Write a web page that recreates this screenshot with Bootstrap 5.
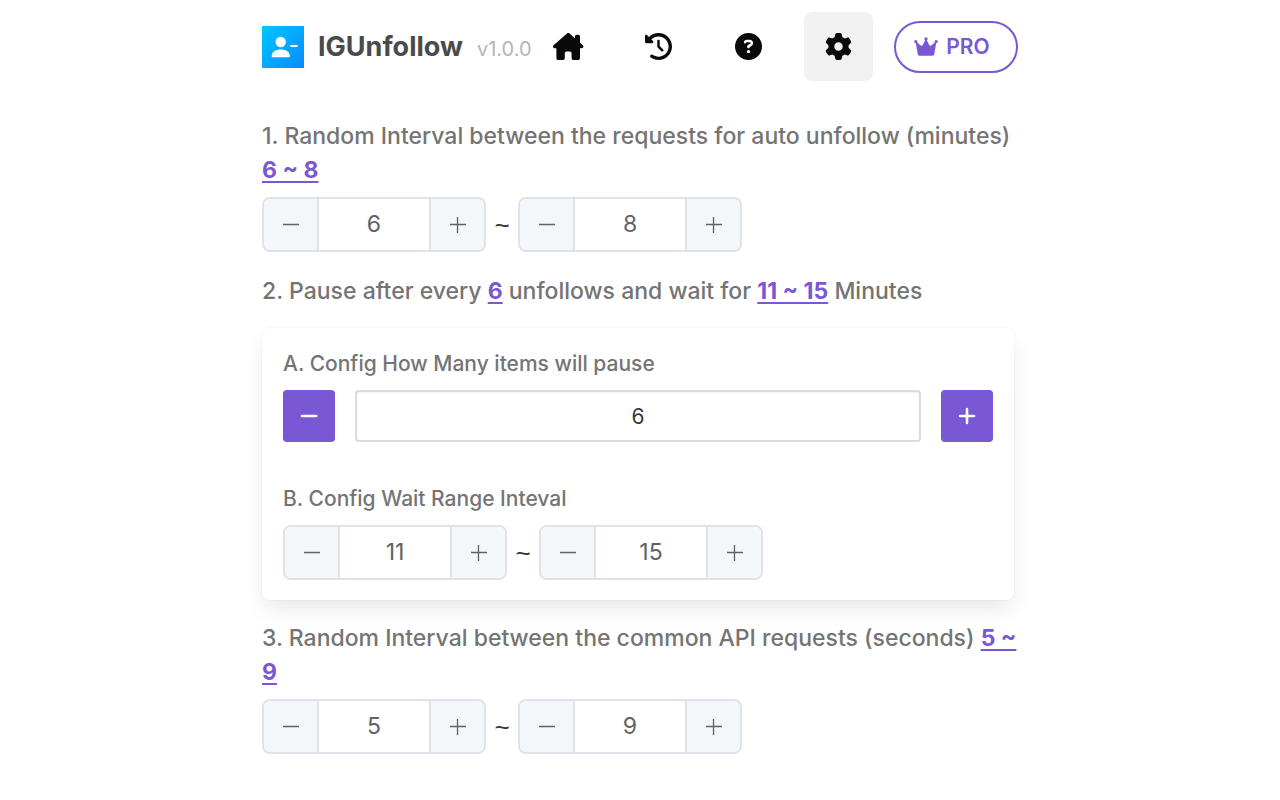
<!DOCTYPE html>
<html lang="en">
<head>
<meta charset="utf-8">
<meta name="viewport" content="width=device-width, initial-scale=1">
<title>IGUnfollow – Settings</title>
<link rel="stylesheet" href="https://cdn.jsdelivr.net/npm/bootstrap@5.3.0/dist/css/bootstrap.min.css">
<style>
  :root { --accent: #7957d5; --text-muted: #747474; --line: #dfe2e9; }
  body { font-family: Inter, "Liberation Sans", sans-serif; color: #4a4a4a; background: #fff; }
  .page { max-width: 756px; }
  .brand { gap: 14px; }
  .logo { width: 42px; height: 42px; }
  .app-name { font-size: 27px; font-weight: 700; line-height: 36px; color: #4a4a4a; }
  .app-version { font-size: 20px; line-height: 36px; color: #b5b5b5; }
  .nav-tile { width: 69px; height: 69px; border-radius: 8px; color: #0a0a0a; }
  .nav-tile.active { background: #f1f1f1; }
  .nav-tile svg { height: 27px; }
  .btn-pro { width: 124px; height: 52px; border: 2px solid var(--accent); color: var(--accent); font-size: 21px; font-weight: 600; }
  .btn-pro:hover { background: var(--accent); color: #fff; }
  .btn-pro svg { width: 24px; height: 21px; }
  .settings { padding-top: 38px; }
  .setting-title { font-size: 23px; line-height: 34px; font-weight: 500; color: var(--text-muted); }
  .sub-title { font-size: 21px; line-height: 32px; font-weight: 500; color: var(--text-muted); }
  .range-value { color: var(--accent); font-weight: 700; text-decoration: underline; text-decoration-thickness: 2px; text-underline-offset: 3px; text-decoration-skip-ink: none; }
  .panel { border-radius: 8px; padding: 20px 21px; box-shadow: 0 11px 22px -3px rgba(10,10,10,.1), 0 0 0 1px rgba(10,10,10,.02); }
  .stepper { width: 224px; height: 55px; border: 2px solid var(--line); border-radius: 8px; }
  .stepper .btn { width: 55px; flex: none; background: #f3f7fa; color: #606266; border-radius: 0; }
  .stepper .btn:first-child { border-right: 2px solid var(--line); }
  .stepper .btn:last-child { border-left: 2px solid var(--line); }
  .stepper input { min-width: 0; font-size: 23px; color: #606266; background: #fff; }
  .stepper svg { width: 18px; height: 18px; }
  .tilde { width: 32px; font-family: "Liberation Sans", sans-serif; font-size: 26px; line-height: 32px; text-align: center; color: #363636; }
  .btn-step { width: 52px; height: 52px; background: var(--accent); color: #fff; border-radius: 4px; }
  .btn-step:hover { background: #6943d0; color: #fff; }
  .btn-step svg { width: 18px; height: 18px; }
  .count-input { height: 52px; font-size: 21px; color: #363636; border: 2px solid #dbdbdb; border-radius: 4px; box-shadow: inset 0 1px 2px rgba(10,10,10,.05); }
  .count-row { gap: 20px; }
  .header-gap { gap: 21px; }
  .after-card { margin-top: 21px; }
  .stepper-row { margin-top: 10px; }
  .next-title { margin-top: 22px; }
  .card-space { margin-top: 20px; }
  .group-space { margin-top: 41px; }
  .control-space { margin-top: 10px; }
</style>
</head>
<body>
<svg class="d-none" aria-hidden="true">
  <symbol id="minus" viewBox="0 0 18 18"><path d="M1 8.500h16" stroke="currentColor" stroke-width="1.300"/></symbol>
  <symbol id="plus" viewBox="0 0 18 18"><path d="M1 8.500h16M8.500 1v16" stroke="currentColor" stroke-width="1.300"/></symbol>
  <symbol id="minus-bold" viewBox="0 0 18 18"><path d="M2 9h14" stroke="currentColor" stroke-width="2.600" stroke-linecap="round"/></symbol>
  <symbol id="plus-bold" viewBox="0 0 18 18"><path d="M2 9h14M9 2v14" stroke="currentColor" stroke-width="2.600" stroke-linecap="round"/></symbol>
</svg>
<div class="page container-fluid px-0">
  <header class="d-flex flex-wrap align-items-center justify-content-between pt-2 mt-1">
    <div class="brand d-flex align-items-center">
      <svg class="logo" viewBox="0 0 42 42" role="img" aria-label="IGUnfollow logo">
        <defs><linearGradient id="sky" x1="0" y1="0" x2="1" y2="1"><stop offset="0" stop-color="#00c6ff"/><stop offset="1" stop-color="#0a8bfb"/></linearGradient></defs>
        <path d="M0 0h42v42H0z" fill="url(#sky)"/>
        <circle cx="18.700" cy="16" r="5.200" fill="#fff"/>
        <path d="M9.800 31.200v-1.400c0-4 3.600-6.400 9-6.400s9 2.400 9 6.400v1.400z" fill="#fff"/>
        <path d="M29 20h6" stroke="#fff" stroke-width="1.800" stroke-linecap="round"/>
      </svg>
      <span class="app-name">IGUnfollow</span>
      <span class="app-version pt-1">v1.0.0</span>
    </div>
    <nav class="d-flex align-items-center header-gap" aria-label="Main">
      <a href="#" class="nav-tile d-flex align-items-center justify-content-center" aria-label="Home"><svg viewBox="0 0 576 512" fill="currentColor"><path d="M575.800 255.500c0 18-15 32.100-32 32.100h-32l.7 160.200c0 2.700-.2 5.400-.5 8.100V472c0 22.100-17.900 40-40 40H456c-1.100 0-2.200 0-3.300-.1c-1.400 .1-2.800 .1-4.200 .1H416 392c-22.100 0-40-17.900-40-40V448 384c0-17.700-14.300-32-32-32H256c-17.700 0-32 14.300-32 32v64 24c0 22.100-17.900 40-40 40H160 128.100c-1.500 0-3-.1-4.500-.2c-1.200 .1-2.400 .2-3.600 .2H104c-22.100 0-40-17.900-40-40V360c0-.9 0-1.900 .1-2.800V287.600H32c-18 0-32-14-32-32.100c0-9 3-17 10-24L266.400 8c7-7 15-8 22-8s15 2 21 7L416 100.700V64c0-17.700 14.300-32 32-32h32c17.700 0 32 14.300 32 32V185l52.800 46.400c8 7 12 15 11 24z"/></svg></a>
      <a href="#" class="nav-tile d-flex align-items-center justify-content-center" aria-label="History"><svg viewBox="0 0 512 512" fill="currentColor"><path d="M75 75L41 41C25.900 25.900 0 36.600 0 57.900V168c0 13.300 10.700 24 24 24H134.100c21.400 0 32.100-25.900 17-41l-30.800-30.800C155 85.500 203 64 256 64c106 0 192 86 192 192s-86 192-192 192c-40.800 0-78.600-12.700-109.700-34.400c-14.500-10.100-34.400-6.600-44.600 7.900s-6.600 34.400 7.900 44.600C151.200 495 201.700 512 256 512c141.400 0 256-114.600 256-256S397.400 0 256 0C185.300 0 121.300 28.700 75 75zm181 53c-13.300 0-24 10.700-24 24V256c0 6.400 2.500 12.500 7 17l72 72c9.400 9.400 24.600 9.400 33.900 0s9.400-24.600 0-33.900l-65-65V152c0-13.300-10.700-24-24-24z"/></svg></a>
      <a href="#" class="nav-tile d-flex align-items-center justify-content-center" aria-label="Help"><svg viewBox="0 0 512 512" fill="currentColor" fill-rule="evenodd"><path d="M256 512A256 256 0 1 0 256 0a256 256 0 1 0 0 512zM169.800 165.300c7.900-22.300 29.100-37.300 52.800-37.300h58.300c34.900 0 63.100 28.300 63.100 63.100c0 22.600-12.100 43.500-31.700 54.800L280 264.400c-.2 13-10.900 23.600-24 23.600c-13.300 0-24-10.700-24-24V250.500c0-8.600 4.600-16.500 12.100-20.800l44.300-25.400c4.700-2.700 7.600-7.700 7.600-13.100c0-8.400-6.800-15.100-15.100-15.100H222.600c-3.400 0-6.400 2.100-7.500 5.300l-.4 1.200c-4.400 12.500-18.200 19-30.600 14.600s-19-18.200-14.600-30.600l.4-1.200zM224 352a32 32 0 1 1 64 0 32 32 0 1 1 -64 0z"/></svg></a>
      <a href="#" class="nav-tile active d-flex align-items-center justify-content-center" aria-label="Settings" aria-current="page"><svg viewBox="0 0 512 512" fill="currentColor"><path d="M495.900 166.600c3.200 8.700 .5 18.400-6.400 24.600l-43.300 39.400c1.100 8.300 1.700 16.800 1.700 25.400s-.6 17.100-1.700 25.400l43.300 39.400c6.900 6.200 9.600 15.900 6.400 24.600c-4.400 11.900-9.700 23.300-15.800 34.300l-4.700 8.100c-6.600 11-14 21.400-22.100 31.200c-5.900 7.200-15.700 9.600-24.500 6.800l-55.700-17.700c-13.400 10.300-28.200 18.900-44 25.400l-12.500 57.100c-2 9.100-9 16.300-18.200 17.800c-13.800 2.300-28 3.500-42.500 3.500s-28.700-1.200-42.500-3.500c-9.200-1.500-16.200-8.700-18.200-17.800l-12.500-57.100c-15.800-6.500-30.600-15.100-44-25.400L83.100 425.900c-8.800 2.800-18.600 .3-24.500-6.800c-8.100-9.800-15.500-20.200-22.100-31.200l-4.700-8.100c-6.100-11-11.400-22.400-15.800-34.300c-3.200-8.700-.5-18.400 6.400-24.600l43.300-39.400C64.600 273.100 64 264.600 64 256s.6-17.100 1.700-25.400L22.400 191.200c-6.900-6.200-9.600-15.900-6.400-24.600c4.400-11.900 9.700-23.300 15.800-34.300l4.700-8.100c6.600-11 14-21.400 22.100-31.200c5.900-7.200 15.700-9.600 24.500-6.800l55.700 17.700c13.400-10.300 28.200-18.900 44-25.400l12.500-57.100c2-9.100 9-16.300 18.200-17.800C227.300 1.200 241.500 0 256 0s28.700 1.200 42.500 3.500c9.200 1.500 16.200 8.700 18.200 17.800l12.500 57.100c15.800 6.500 30.600 15.100 44 25.400l55.700-17.700c8.800-2.800 18.600-.3 24.500 6.800c8.100 9.800 15.500 20.200 22.100 31.200l4.700 8.100c6.100 11 11.400 22.400 15.800 34.300zM256 336c44.200 0 80-35.800 80-80s-35.800-80-80-80s-80 35.800-80 80s35.800 80 80 80z"/></svg></a>
      <button type="button" class="btn btn-pro rounded-pill d-flex align-items-center justify-content-center gap-2 p-0 pe-2"><svg viewBox="0 0 576 512" fill="currentColor" aria-hidden="true"><path d="M309 106c11.400-7 19-19.700 19-34c0-22.100-17.900-40-40-40s-40 17.900-40 40c0 14.400 7.600 27 19 34L209.700 220.600c-9.100 18.200-32.700 23.400-48.600 10.700L72 160c5-6.700 8-15 8-24c0-22.100-17.900-40-40-40S0 113.900 0 136s17.900 40 40 40c.2 0 .5 0 .7 0L86.400 440c5 26 18 40 42 40H448c24 0 37-14 42-40L535.300 176c.2 0 .5 0 .7 0c22.100 0 40-17.900 40-40s-17.900-40-40-40s-40 17.900-40 40c0 9 3 17.300 8 24l-89.100 71.300c-15.900 12.700-39.500 7.500-48.600-10.700L309 106z"/></svg>PRO</button>
    </nav>
  </header>

  <main class="settings">
    <h2 class="setting-title mb-0">1. Random Interval between the requests for auto unfollow (minutes) <span class="range-value">6&nbsp;~ 8</span></h2>
    <div class="d-flex flex-wrap align-items-center stepper-row">
      <div class="stepper d-flex overflow-hidden">
        <button type="button" class="btn border-top-0 border-bottom-0 border-start-0 p-0 d-flex align-items-center justify-content-center" aria-label="Decrease minimum minutes"><svg><use href="#minus"/></svg></button>
        <input type="text" inputmode="numeric" class="border-0 flex-fill text-center p-0" value="6" aria-label="Minimum minutes">
        <button type="button" class="btn border-top-0 border-bottom-0 border-end-0 p-0 d-flex align-items-center justify-content-center" aria-label="Increase minimum minutes"><svg><use href="#plus"/></svg></button>
      </div>
      <span class="tilde">~</span>
      <div class="stepper d-flex overflow-hidden">
        <button type="button" class="btn border-top-0 border-bottom-0 border-start-0 p-0 d-flex align-items-center justify-content-center" aria-label="Decrease maximum minutes"><svg><use href="#minus"/></svg></button>
        <input type="text" inputmode="numeric" class="border-0 flex-fill text-center p-0" value="8" aria-label="Maximum minutes">
        <button type="button" class="btn border-top-0 border-bottom-0 border-end-0 p-0 d-flex align-items-center justify-content-center" aria-label="Increase maximum minutes"><svg><use href="#plus"/></svg></button>
      </div>
    </div>

    <h2 class="setting-title next-title mb-0">2. Pause after every <span class="range-value">6</span> unfollows and wait for <span class="range-value">11 ~ 15</span> Minutes</h2>
    <section class="panel bg-white card-space me-1">
      <label class="sub-title d-block" for="pause-count">A. Config How Many items will pause</label>
      <div class="d-flex count-row control-space">
        <button type="button" class="btn btn-step border-0 p-0 flex-shrink-0 d-flex align-items-center justify-content-center" aria-label="Fewer items"><svg><use href="#minus-bold"/></svg></button>
        <input type="text" inputmode="numeric" id="pause-count" class="form-control count-input text-center" value="6">
        <button type="button" class="btn btn-step border-0 p-0 flex-shrink-0 d-flex align-items-center justify-content-center" aria-label="More items"><svg><use href="#plus-bold"/></svg></button>
      </div>
      <h3 class="sub-title group-space mb-0">B. Config Wait Range Inteval</h3>
      <div class="d-flex flex-wrap align-items-center control-space">
        <div class="stepper d-flex overflow-hidden">
          <button type="button" class="btn border-top-0 border-bottom-0 border-start-0 p-0 d-flex align-items-center justify-content-center" aria-label="Decrease minimum wait"><svg><use href="#minus"/></svg></button>
          <input type="text" inputmode="numeric" class="border-0 flex-fill text-center p-0" value="11" aria-label="Minimum wait">
          <button type="button" class="btn border-top-0 border-bottom-0 border-end-0 p-0 d-flex align-items-center justify-content-center" aria-label="Increase minimum wait"><svg><use href="#plus"/></svg></button>
        </div>
        <span class="tilde">~</span>
        <div class="stepper d-flex overflow-hidden">
          <button type="button" class="btn border-top-0 border-bottom-0 border-start-0 p-0 d-flex align-items-center justify-content-center" aria-label="Decrease maximum wait"><svg><use href="#minus"/></svg></button>
          <input type="text" inputmode="numeric" class="border-0 flex-fill text-center p-0" value="15" aria-label="Maximum wait">
          <button type="button" class="btn border-top-0 border-bottom-0 border-end-0 p-0 d-flex align-items-center justify-content-center" aria-label="Increase maximum wait"><svg><use href="#plus"/></svg></button>
        </div>
      </div>
    </section>

    <h2 class="setting-title after-card mb-0">3. Random Interval between the common API requests (seconds) <span class="range-value">5 ~ 9</span></h2>
    <div class="d-flex flex-wrap align-items-center stepper-row">
      <div class="stepper d-flex overflow-hidden">
        <button type="button" class="btn border-top-0 border-bottom-0 border-start-0 p-0 d-flex align-items-center justify-content-center" aria-label="Decrease minimum seconds"><svg><use href="#minus"/></svg></button>
        <input type="text" inputmode="numeric" class="border-0 flex-fill text-center p-0" value="5" aria-label="Minimum seconds">
        <button type="button" class="btn border-top-0 border-bottom-0 border-end-0 p-0 d-flex align-items-center justify-content-center" aria-label="Increase minimum seconds"><svg><use href="#plus"/></svg></button>
      </div>
      <span class="tilde">~</span>
      <div class="stepper d-flex overflow-hidden">
        <button type="button" class="btn border-top-0 border-bottom-0 border-start-0 p-0 d-flex align-items-center justify-content-center" aria-label="Decrease maximum seconds"><svg><use href="#minus"/></svg></button>
        <input type="text" inputmode="numeric" class="border-0 flex-fill text-center p-0" value="9" aria-label="Maximum seconds">
        <button type="button" class="btn border-top-0 border-bottom-0 border-end-0 p-0 d-flex align-items-center justify-content-center" aria-label="Increase maximum seconds"><svg><use href="#plus"/></svg></button>
      </div>
    </div>
  </main>
</div>
<script src="https://cdn.jsdelivr.net/npm/bootstrap@5.3.0/dist/js/bootstrap.bundle.min.js"></script>
</body>
</html>
